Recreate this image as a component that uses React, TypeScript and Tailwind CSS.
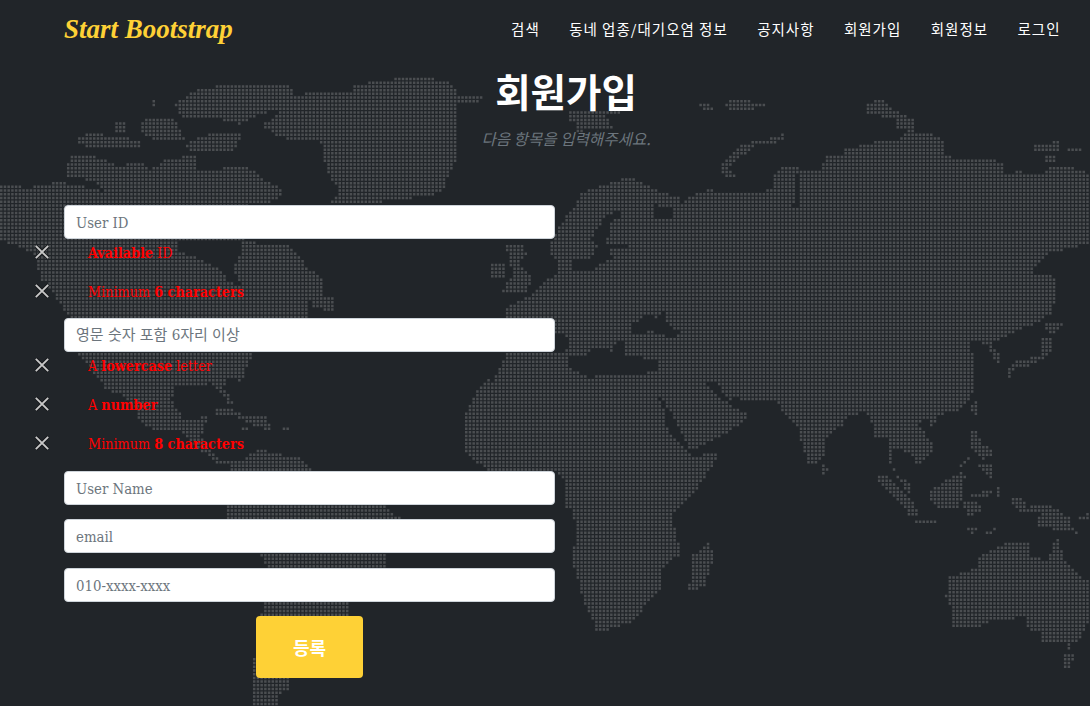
import React from 'react';

type Pt = [number, number];

// outlines were read off 3x crops of the picture, so each crop gets its own origin
const seg = (ox: number, oy: number, s: string): Pt[] =>
  s.trim().split(/\s+/).map((p) => {
    const [x, y] = p.split(',').map(Number);
    return [x / 2.877 + ox, y / 3 + oy] as Pt;
  });
const NW = (s: string) => seg(0, 60, s);
const NE = (s: string) => seg(545, 60, s);
const SW = (s: string) => seg(0, 376, s);
const SE = (s: string) => seg(545, 376, s);

const land: Pt[][] = [
  // arctic canada
  NW('500,130 550,90 660,65 830,65 850,120 800,145 740,160 690,190 620,170 560,170 520,165'),
  NW('330,180 360,175 360,210 330,210'),
  NW('395,195 420,165 500,175 530,235 440,235 410,225'),
  NW('215,235 260,210 310,225 395,235 400,260 330,260 270,260 215,250'),
  NW('530,250 600,215 690,220 670,270 540,270'),
  NW('430,120 445,120 445,135 430,135'),
  // greenland
  NW('1020,70 1200,42 1300,68 1310,98 1385,100 1375,125 1315,130 1312,240 1310,300 1285,345 1280,380 1230,405 1150,415 1030,430 945,430 975,390 945,350 925,280 920,240 800,230 745,190 800,160 810,125 880,95 1000,95'),
  // north america
  [
    ...NW('0,375 90,378 160,362 230,372 300,395 270,360 190,345 185,320 205,280 290,290 340,315 410,298 425,330 480,290 560,285 565,330 640,320 700,310 760,355 805,385 800,420 710,425 700,540 830,555 885,620 930,660 930,700 885,720 880,770 830,775 720,830 720,890 690,960'),
    ...SW('655,0 640,30 670,80 650,80 640,50 600,20 500,30 490,70 530,130 600,115 585,150 520,165 430,155 395,125 395,100 340,50 300,35 280,0'),
    ...NW('225,890 195,770 140,680 100,620 100,580 40,550 0,540'),
  ],
  NW('895,705 960,710 960,750 895,740'),
  NW('105,620 130,620 130,660 115,660'),
  // caribbean, central and south america
  SW('620,95 670,95 700,120 760,120 780,145 730,145 680,120 620,110'),
  SW('690,150 710,150 710,158 690,158'),
  SW('755,145 775,145 775,158 755,158'),
  SW('805,150 825,150 825,158 805,158'),
  SW('520,165 585,150 575,180 615,230 640,262 620,255 560,210'),
  SW('605,225 640,250 690,255 720,228 755,215 790,230 855,240 880,260 905,285 1000,340 1110,390 1150,425 1110,470 1110,575 1050,610 1000,680 995,715 930,750 830,895 825,935 795,960 790,995 725,995 720,900 735,790 750,700 770,575 745,535 650,420 650,390 680,340 660,270'),
  // uk, ireland, iceland
  NW('1450,550 1500,550 1510,580 1490,610 1530,650 1510,695 1430,695 1470,650 1465,600'),
  NW('1410,605 1445,605 1445,655 1410,655'),
  NE('60,155 120,145 240,145 170,165 200,205 90,210 90,185 60,175'),
  // eurasia and africa as one outline
  [
    ...NE('0,650 30,640 28,600 10,580 10,555 40,490 90,420 100,395 150,375 240,345 300,380 380,410 385,430 415,400 500,395 570,395 650,385 650,345 680,310 715,310 735,330 795,320 800,285 860,285 860,265 950,240 1010,235 1040,205 1130,225 1150,250 1150,285 1210,295 1320,300 1320,340 1350,330 1430,340 1440,320 1520,320 1580,345 1580,555 1530,555 1450,575 1415,610 1395,640 1440,640 1465,650 1470,700 1450,760 1405,790 1360,805 1315,830 1280,850 1245,845 1215,835 1228,880 1235,940'),
    ...SE('1235,30 1215,65 1185,100 1130,115 1115,145 1105,145 1095,115 1070,140 1090,170 1110,200 1110,230 1065,265 1060,240 1015,215 990,220 990,255 1010,290 1045,320 1045,345 1035,340 1005,290 985,250 985,180 945,180 945,150 920,105 870,115 850,145 800,190 805,225 770,265 755,260 735,200 720,140 690,115 660,70 555,70 545,55 525,80 580,110 560,140 490,185 440,210 410,215 415,240 490,225 490,250 465,285 430,340 375,395 360,430 375,470 385,530 330,575 330,630 300,670 250,730 220,745 165,760 145,760 135,735 100,650 90,600 70,540 90,470 75,400 50,390 50,310 30,285'),
    ...SW('1410,285 1375,260 1335,220 1335,110 1370,40 1410,0'),
    ...NW('1400,990 1430,920 1450,885 1450,740 1530,695'),
  ],
  // korea and japan
  NE('1280,850 1310,880 1310,905 1295,905 1270,860'),
  NE('1320,950 1340,905 1420,880 1430,825 1455,830 1450,880 1400,910 1345,925 1340,950'),
  NE('1430,790 1490,780 1490,795 1460,815 1430,810'),
  SE('1295,65 1320,30 1320,45'),
  // arctic islands
  NE('505,310 560,250 625,235 680,220 680,240 610,250 540,300 520,325 560,350 520,355 505,330'),
  NE('420,122 465,120 490,150 465,150'),
  NE('505,125 550,110 635,130 575,150 535,148'),
  NE('925,130 960,110 1000,145 1065,180 1060,205 1010,200 1000,170 925,160'),
  NE('1400,250 1480,240 1480,270 1400,265'),
  NE('1495,255 1540,265 1540,270 1500,268'),
  NE('1430,285 1470,285 1470,305 1440,305'),
  NE('460,375 480,390 465,392'),
  // south east asia
  SE('1220,80 1238,75 1238,112 1222,100'),
  SE('1218,155 1245,155 1248,200 1280,215 1280,235 1255,245 1220,205'),
  SE('1240,265 1290,260 1280,300 1265,295'),
  SE('1190,262 1215,238 1216,245 1195,268'),
  SE('955,295 975,295 1030,345 1065,390 1068,420 1045,415 1005,360 955,310'),
  SE('1105,335 1195,285 1205,295 1190,395 1135,398 1105,370'),
  SE('1200,375 1245,370 1250,405 1210,420'),
  SE('1060,425 1140,435 1140,442 1062,442'),
  SE('1135,447 1205,447 1205,455 1135,455'),
  SE('1210,450 1250,450 1225,475 1210,462'),
  SE('1250,470 1300,448 1300,455 1265,475'),
  SE('1218,350 1280,340 1280,355 1218,356'),
  SE('1290,330 1310,325 1310,365 1292,360'),
  SE('1335,360 1370,360 1380,390 1430,380 1470,395 1510,425 1510,450 1540,475 1500,460 1450,455 1410,450 1420,410 1370,410 1340,380'),
  SE('1525,420 1565,405 1565,420 1530,432'),
  // australia, tasmania, madagascar, sri lanka
  SE('1155,600 1210,580 1245,570 1245,535 1290,515 1330,495 1395,490 1395,540 1440,548 1460,500 1465,460 1490,550 1520,580 1580,630 1580,700 1540,770 1530,795 1430,795 1420,760 1380,755 1375,720 1270,735 1250,750 1170,755 1165,700 1150,660'),
  SE('1485,830 1520,830 1510,870 1490,870'),
  SE('1495,795 1512,795 1510,815 1497,815'),
  SE('475,490 478,550 455,630 410,640 418,535 450,515'),
  SE('790,250 815,285 795,290 788,265'),
];

const water: Pt[][] = [
  // hudson bay
  NW('510,540 690,540 690,575 668,625 690,670 650,665 640,630 570,590 510,570'),
  // baltic, white sea
  NE('130,530 175,460 215,450 215,465 180,490 175,550 245,555 180,560 190,590 130,625 75,630 70,600 130,590 150,550'),
  NE('310,430 360,440 375,465 315,470'),
  // mediterranean, black sea
  NE('65,880 110,885 130,860 190,870 210,835 228,840 230,880 320,900 320,925 280,940 160,935 130,950 70,925'),
  NE('40,815 70,840 50,875 -20,860 -60,800'),
  NE('250,790 290,755 320,770 340,750 350,790 385,810 370,830 300,810 250,820'),
  // ob gulf, red sea, persian gulf
  NE('720,340 728,340 733,400 722,435 705,435 722,410'),
  SE('312,45 328,60 365,120 410,215 395,215 345,150 340,100'),
  SE('460,15 490,20 525,65 510,72'),
];

const inside = (x: number, y: number, poly: Pt[]) => {
  let hit = false;
  for (let i = 0, j = poly.length - 1; i < poly.length; j = i++) {
    const [xi, yi] = poly[i];
    const [xj, yj] = poly[j];
    if (yi > y !== yj > y && x < ((xj - xi) * (y - yi)) / (yj - yi) + xi) hit = !hit;
  }
  return hit;
};

// one square per grid cell, so the coast stays on the dot grid
const buildDots = () => {
  const pitch = 3.72;
  const size = 2.5;
  let d = '';
  for (let y = 74; y < 706; y += pitch) {
    for (let x = 0; x < 1090; x += pitch) {
      if (land.some((p) => inside(x, y, p)) && !water.some((p) => inside(x, y, p))) {
        d += `M${x.toFixed(2)} ${y.toFixed(2)}h${size}v${size}h-${size}z`;
      }
    }
  }
  return d;
};

const WorldMap: React.FC = () => {
  const d = React.useMemo(buildDots, []);
  return (
    <svg className="absolute inset-0 h-full w-full" viewBox="0 0 1090 706" aria-hidden="true">
      <path d={d} fill="#4b4e51" />
    </svg>
  );
};

const navItems = ['검색', '동네 업종/대기오염 정보', '공지사항', '회원가입', '회원정보', '로그인'];

const Cross: React.FC = () => (
  <svg className="h-4 w-4 shrink-0" viewBox="0 0 16 16" aria-hidden="true">
    <path d="M1.8 1.8l12.4 12.4M14.2 1.8L1.8 14.2" stroke="#17191b" strokeWidth="3.4" />
    <path d="M1.8 1.8l12.4 12.4M14.2 1.8L1.8 14.2" stroke="#c8c8c8" strokeWidth="1.9" />
  </svg>
);

const Rule: React.FC<{ children: React.ReactNode }> = ({ children }) => (
  <li className="flex h-[26px] items-center">
    <Cross />
    <span className="ml-[38px] pt-[2px] text-[14.25px] leading-none text-[#ff0000]">{children}</span>
  </li>
);

const Field: React.FC<{ placeholder: string; className?: string }> = ({ placeholder, className }) => (
  <input
    placeholder={placeholder}
    className={`block h-[34px] w-full rounded border border-[#ced4da] bg-white px-[11px] text-[#495057] outline-none placeholder:text-[#6c757d] ${className ?? 'text-[14.8px]'}`}
  />
);

export default function App() {
  return (
    <div className="relative h-[706px] w-[1090px] overflow-hidden bg-[#212529] font-['DejaVu_Serif_Condensed','Noto_Sans_CJK_KR',serif]">
      <WorldMap />

      <div className="relative">
        <nav className="flex h-[58px] items-center justify-between pl-[64px] pr-[29.5px]">
          <a className="font-['Liberation_Serif',serif] text-[27px] font-bold italic leading-none text-[#fed136]">
            Start Bootstrap
          </a>
          <ul className="flex gap-[29.4px] font-['Noto_Sans_CJK_KR',sans-serif] text-[14.5px] tracking-[1px] text-white">
            {navItems.map((item) => (
              <li key={item}>{item}</li>
            ))}
          </ul>
        </nav>

        <div className="flex flex-col items-center pl-[42px] font-['Noto_Sans_CJK_KR',sans-serif]">
          <h2 className="mt-[7px] text-[38.5px] font-bold leading-[50px] text-white">회원가입</h2>
          <h3 className="mt-[11px] text-[15.6px] font-normal italic leading-[24px] text-[#6c757d]">
            다음 항목을 입력해주세요.
          </h3>
        </div>

        <form className="ml-[64px] mt-[55px] w-[491px]">
          <Field placeholder="User ID" />
          <ul className="-ml-[30px] flex flex-col gap-[13px] pb-[14px]">
            <Rule>
              <b>Available</b> ID
            </Rule>
            <Rule>
              Minimum <b>6 characters</b>
            </Rule>
          </ul>
          <Field placeholder="영문 숫자 포함 6자리 이상" className="text-[15px]" />
          <ul className="-ml-[30px] flex flex-col gap-[13px] pb-[15px]">
            <Rule>
              A <b>lowercase</b> letter
            </Rule>
            <Rule>
              A <b>number</b>
            </Rule>
            <Rule>
              Minimum <b>8 characters</b>
            </Rule>
          </ul>
          <Field placeholder="User Name" />
          <Field placeholder="email" className="mt-[14px] text-[14.8px]" />
          <Field placeholder="010-xxxx-xxxx" className="mt-[15px] text-[14.8px]" />
          <div className="mt-[14px] flex justify-center">
            <button
              type="button"
              className="h-[62px] w-[107px] rounded bg-[#fed136] font-['Noto_Sans_CJK_KR',sans-serif] text-[18px] font-bold text-white"
            >
              등록
            </button>
          </div>
        </form>
      </div>
    </div>
  );
}
